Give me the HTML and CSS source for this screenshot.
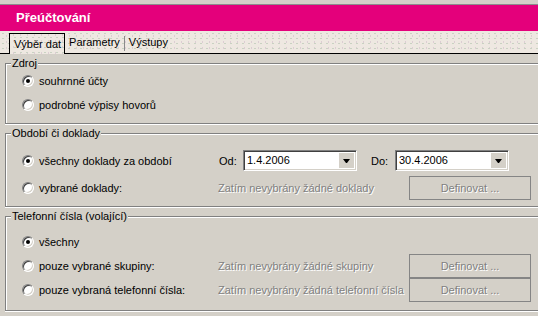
FILE: index.html
```html
<!DOCTYPE html>
<html lang="cs">
<head>
<meta charset="utf-8">
<title>Přeúčtování</title>
<link rel="stylesheet" href="styles.css">
</head>
<body>
<div class="header">Přeúčtování</div>
<div class="tabs">
  <div class="tab active">Výběr dat</div>
  <div class="tab">Parametry</div>
  <div class="tab-sep"></div>
  <div class="tab">Výstupy</div>
</div>
<div class="content">
  <fieldset class="group g1">
    <legend>Zdroj</legend>
    <div class="row"><label class="opt"><span class="radio checked"></span>souhrnné účty</label></div>
    <div class="row"><label class="opt"><span class="radio"></span>podrobné výpisy hovorů</label></div>
  </fieldset>
  <fieldset class="group g2">
    <legend>Období či doklady</legend>
    <div class="row r27">
      <label class="opt col1"><span class="radio checked"></span>všechny doklady za období</label>
      <span class="lbl">Od:</span>
      <div class="combo"><span class="val">1.4.2006</span><span class="drop"><span class="arrow"></span></span></div>
      <span class="lbl lbl-do">Do:</span>
      <div class="combo"><span class="val">30.4.2006</span><span class="drop"><span class="arrow"></span></span></div>
    </div>
    <div class="row r27">
      <label class="opt col1"><span class="radio"></span>vybrané doklady:</label>
      <span class="disabled info">Zatím nevybrány žádné doklady</span>
      <span class="btn disabled">Definovat ...</span>
    </div>
  </fieldset>
  <fieldset class="group g3">
    <legend>Telefonní čísla (volající)</legend>
    <div class="row"><label class="opt col1"><span class="radio checked"></span>všechny</label></div>
    <div class="row">
      <label class="opt col1"><span class="radio"></span>pouze vybrané skupiny:</label>
      <span class="disabled info">Zatím nevybrány žádné skupiny</span>
      <span class="btn disabled">Definovat ...</span>
    </div>
    <div class="row">
      <label class="opt col1"><span class="radio"></span>pouze vybraná telefonní čísla:</label>
      <span class="disabled info">Zatím nevybrány žádná telefonní čísla</span>
      <span class="btn disabled">Definovat ...</span>
    </div>
  </fieldset>
</div>
</body>
</html>
```

FILE: styles.css
```css
html, body {
  margin: 0;
  padding: 0;
  width: 538px;
  height: 316px;
  overflow: hidden;
  background: #d4d0c8;
  font-family: "Liberation Sans", Arial, sans-serif;
  font-size: 11px;
  color: #000;
}

.header {
  margin-top: 4px;
  border-top: 1px solid #8c8c8c;
  height: 26px;
  line-height: 25px;
  padding-left: 16px;
  background: #e4007b;
  color: #fff;
  font-weight: bold;
  font-size: 13px;
}

.tabs {
  display: flex;
  align-items: flex-end;
  height: 22px;
  padding-left: 9px;
  border-bottom: 1px solid #000;
  background-color: #eee8e1;
  background-image:
    radial-gradient(circle, #c9d2c2 0.8px, transparent 1.1px),
    radial-gradient(circle, #dccdd3 0.8px, transparent 1.1px);
  background-size: 6px 5px, 7px 6px;
  background-position: 0 0, 3px 2px;
}

.tab {
  height: 20px;
  line-height: 19px;
  padding: 0 4px;
  box-sizing: border-box;
}

.tab.active {
  height: 21px;
  margin-bottom: -1px;
  padding: 0 3px 0 4px;
  border: 1px solid #000;
  border-bottom: none;
  background-color: #eee8e1;
  background-image:
    radial-gradient(circle, #c9d2c2 0.8px, transparent 1.1px),
    radial-gradient(circle, #dccdd3 0.8px, transparent 1.1px);
  background-size: 6px 5px, 7px 6px;
  background-position: 0 0, 3px 2px;
  background-attachment: fixed;
  line-height: 20px;
}

.tab-sep {
  width: 1px;
  height: 15px;
  margin-bottom: 2px;
  background: #8a8a8a;
}

.content {
  padding-left: 5px;
}

.group {
  margin: 0 0 3px 0;
  padding: 0 0 0 5px;
  border: 1px solid #808080;
  border-right: none;
  box-shadow: inset 1px 1px 0 #fff, 0 1px 0 #fff, -1px 0 0 transparent;
  min-inline-size: 0;
}

.group legend {
  position: relative;
  padding: 0 1px;
  line-height: 12px;
  background: #d4d0c8;
}

.g1 { margin-top: 3px; padding-bottom: 6px; }
.g2 { padding-top: 8px; padding-bottom: 5px; }
.g3 { padding-top: 8px; padding-bottom: 8px; }

.row {
  display: flex;
  align-items: center;
  height: 24px;
  padding-left: 11px;
}

.row.r27 { height: 27px; }

.opt {
  display: flex;
  align-items: center;
}

.col1 {
  width: 196px;
  flex: none;
}

.radio {
  position: relative;
  width: 12px;
  height: 12px;
  box-sizing: border-box;
  border-radius: 50%;
  border: 1px solid;
  border-color: #808080 #ffffff #ffffff #808080;
  background: #fff;
  box-shadow: inset 1px 1px 0 #404040, inset -1px -1px 0 #d4d0c8;
  margin-right: 5px;
  flex: none;
}

.radio.checked::after {
  content: "";
  position: absolute;
  left: 3px;
  top: 3px;
  width: 4px;
  height: 4px;
  border-radius: 50%;
  background: #000;
}

.lbl {
  width: 25px;
  flex: none;
  padding-left: 1px;
  box-sizing: border-box;
}

.lbl-do {
  margin-left: 13px;
}

.combo {
  display: flex;
  align-items: stretch;
  width: 114px;
  height: 21px;
  box-sizing: border-box;
  border: 1px solid;
  border-color: #808080 #ffffff #ffffff #808080;
  box-shadow: inset 1px 1px 0 #404040, inset -1px -1px 0 #d4d0c8;
  background: #fff;
  padding: 2px 2px 2px 3px;
  flex: none;
}

.combo .val {
  flex: 1;
  line-height: 15px;
}

.combo .drop {
  width: 15px;
  background: #d4d0c8;
  display: flex;
  align-items: center;
  justify-content: center;
}

.arrow {
  width: 1px;
  height: 0;
  border-left: 3px solid transparent;
  border-right: 3px solid transparent;
  border-top: 4px solid #000;
}

.disabled {
  color: #808080;
  text-shadow: 1px 1px 0 #fff;
}

.info {
  width: 191px;
  flex: none;
}

.btn {
  width: 122px;
  height: 24px;
  box-sizing: border-box;
  border: 1px solid #858585;
  display: flex;
  align-items: center;
  justify-content: center;
  flex: none;
}
```
